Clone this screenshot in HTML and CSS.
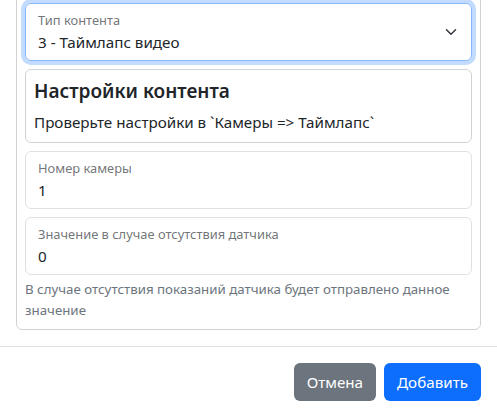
FILE: index.html
```html
<!DOCTYPE html>
<html lang="ru">
<head>
  <meta charset="UTF-8">
  <title>Добавить контент</title>
  <link rel="stylesheet" href="styles.css">
</head>
<body>

  <div class="modal">
    <div class="modal-body">
      <div class="card">

        <!-- Content type -->
        <div class="field focused">
          <label for="contentType">Тип контента</label>
          <select id="contentType">
            <option>3 - Таймлапс видео</option>
          </select>
          <svg class="chevron" viewBox="0 0 16 16" width="16" height="12">
            <path d="m2 5 6 6 6-6" fill="none" stroke="#343a40" stroke-width="2" stroke-linecap="round" stroke-linejoin="round"/>
          </svg>
        </div>

        <div class="info">
          <h5>Настройки контента</h5>
          <p>Проверьте настройки в `Камеры =&gt; Таймлапс`</p>
        </div>

        <div class="field">
          <label for="camera">Номер камеры</label>
          <input type="text" id="camera" value="1">
        </div>

        <div class="field">
          <label for="fallback">Значение в случае отсутствия датчика</label>
          <input type="text" id="fallback" value="0">
        </div>
        <div class="hint">В случае отсутствия показаний датчика будет отправлено данное значение</div>

      </div>
    </div>

    <div class="modal-footer">
      <button class="btn btn-secondary">Отмена</button>
      <button class="btn btn-primary">Добавить</button>
    </div>
  </div>

</body>
</html>
```

FILE: styles.css
```css
body {
  margin: 0;
  background-color: #fff;
  font-family: "Noto Sans", "Open Sans", sans-serif;
  font-size: 15.2px;
  line-height: 24px;
  color: #212529;
  overflow: hidden;
}

.modal {
  margin-top: -22px;
}

.modal-body {
  padding: 16px;
}

.card {
  border: 1px solid rgba(0, 0, 0, .175);
  border-radius: 6px;
  padding: 8px;
  display: flex;
  flex-direction: column;
  gap: 8px;
}

.field {
  position: relative;
  height: 58px;
  box-sizing: border-box;
  border: 1px solid #dee2e6;
  border-radius: 6px;
  padding: 6px 12px 0;
}

.field.focused {
  border-color: #86b7fe;
  box-shadow: 0 0 0 4px rgba(13, 110, 253, .25);
}

.field label {
  display: block;
  font-size: 12.9px;
  line-height: 20px;
  color: rgba(33, 37, 41, .65);
}

.field input,
.field select {
  display: block;
  width: 100%;
  border: 0;
  padding: 0;
  margin: 0;
  font: inherit;
  line-height: 24px;
  height: 24px;
  color: #212529;
  background: transparent;
  outline: none;
  appearance: none;
}

.chevron {
  position: absolute;
  right: 12px;
  top: 22px;
}

.info {
  border: 1px solid rgba(0, 0, 0, .175);
  border-radius: 6px;
  padding: 8px;
}

.info h5 {
  margin: 0 0 8px;
  padding-top: 2px;
  font-size: 19px;
  font-weight: 600;
  line-height: 22px;
}

.info p {
  margin: 0;
}

.hint {
  margin-top: -4px;
  font-size: 13.3px;
  line-height: 21px;
  color: #6c757d;
}

.modal-footer {
  border-top: 1px solid #dee2e6;
  padding: 12px;
  display: flex;
  justify-content: flex-end;
}

.btn {
  margin: 4px;
  padding: 6px 12px;
  font: inherit;
  line-height: 24px;
  border: 1px solid transparent;
  border-radius: 6px;
  color: #fff;
  cursor: pointer;
}

.btn-secondary {
  background-color: #6c757d;
}

.btn-primary {
  background-color: #0d6efd;
}
```
